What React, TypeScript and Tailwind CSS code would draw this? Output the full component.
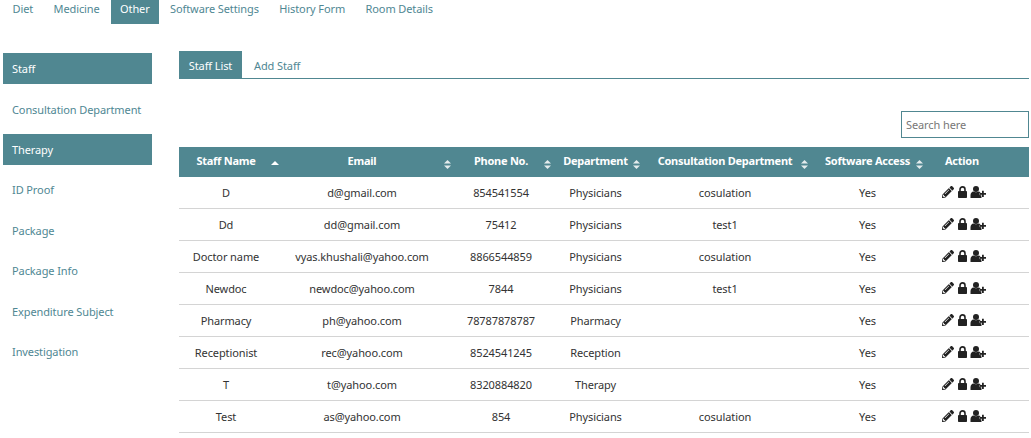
import React from "react";
import { FaPencilAlt } from "react-icons/fa";

const topTabs = ["Diet", "Medicine", "Other", "Software Settings", "History Form", "Room Details"];

const sideItems = [
  { label: "Staff", active: true },
  { label: "Consultation Department", active: false },
  { label: "Therapy", active: true },
  { label: "ID Proof", active: false },
  { label: "Package", active: false },
  { label: "Package Info", active: false },
  { label: "Expenditure Subject", active: false },
  { label: "Investigation", active: false },
];

const columns = [
  { label: "Staff Name", sort: "asc", sortClass: "-right-[6px] top-[14px]" },
  { label: "Email", sort: "both", sortClass: "right-[0px] top-[13px]" },
  { label: "Phone No.", sort: "both", sortClass: "right-[0px] top-[13px]" },
  { label: "Department", sort: "both", sortClass: "right-[0px] top-[13px]" },
  { label: "Consultation Department", sort: "both", sortClass: "right-[2px] top-[13px]" },
  { label: "Software Access", sort: "both", sortClass: "right-[2px] top-[13px]" },
];

const rows = [
  ["D", "d@gmail.com", "854541554", "Physicians", "cosulation"],
  ["Dd", "dd@gmail.com", "75412", "Physicians", "test1"],
  ["Doctor name", "vyas.khushali@yahoo.com", "8866544859", "Physicians", "cosulation"],
  ["Newdoc", "newdoc@yahoo.com", "7844", "Physicians", "test1"],
  ["Pharmacy", "ph@yahoo.com", "78787878787", "Pharmacy", ""],
  ["Receptionist", "rec@yahoo.com", "8524541245", "Reception", ""],
  ["T", "t@yahoo.com", "8320884820", "Therapy", ""],
  ["Test", "as@yahoo.com", "854", "Physicians", "cosulation"],
];

const SortIcon = ({ type }: { type: string }) =>
  type === "asc" ? (
    <svg width="8" height="4" viewBox="0 0 8 4" className="block">
      <path d="M4 0 L8 4 L0 4 Z" fill="#fff" />
    </svg>
  ) : (
    <svg width="7" height="9" viewBox="0 0 7 9" className="block">
      <path d="M3.5 0 L7 3.5 L0 3.5 Z" fill="#e4eced" />
      <path d="M3.5 9 L7 5.5 L0 5.5 Z" fill="#e4eced" />
    </svg>
  );

const LockIcon = () => (
  <svg width="9" height="12" viewBox="0 0 9 12" className="block shrink-0">
    <path d="M2 6V3.4a2.5 2.5 0 0 1 5 0V6" fill="none" stroke="#222" strokeWidth="1.6" />
    <rect x="0" y="5" width="9" height="7" rx="0.8" fill="#222" />
  </svg>
);

const UserPlusIcon = () => (
  <svg width="16" height="12" viewBox="0 0 16 12" className="block shrink-0">
    <circle cx="6" cy="3" r="3" fill="#222" />
    <path d="M0.5 12V9.2C0.5 7.2 1.8 5.8 3.5 5.6C4.8 6.4 7.2 6.4 8.5 5.6C10.2 5.8 11.5 7.2 11.5 9.2V12Z" fill="#222" />
    <path d="M12 4.8h1.8v2.2H16v1.8h-2.2V11H12V8.8H9.8V7H12Z" fill="#222" stroke="#fff" strokeWidth="0.6" paintOrder="stroke" />
  </svg>
);

const App = () => {
  return (
    <div className="w-[1031px] h-[438px] overflow-hidden bg-white font-['Noto_Sans',sans-serif] text-[11px] tracking-[-0.1px] text-[#333]">
      <div className="flex h-6 pl-[3px]">
        {topTabs.map((t) => (
          <div
            key={t}
            className={`h-6 px-[9.5px] leading-[18px] mr-[1.4px] ${
              t === "Other" ? "bg-[#508791] text-white" : "text-[#4f8793]"
            }`}
          >
            {t}
          </div>
        ))}
      </div>

      <div className="flex pt-[27px] pl-[3px]">
        <div className="w-[149px] shrink-0 flex flex-col gap-[9.4px] pt-[2.2px]">
          {sideItems.map((s) => (
            <div
              key={s.label}
              className={`h-[31px] leading-[31px] pl-[9px] whitespace-nowrap ${
                s.active ? "bg-[#508791] text-white" : "text-[#4f8793]"
              }`}
            >
              {s.label}
            </div>
          ))}
        </div>

        <div className="w-[850px] ml-[27px]">
          <div className="flex h-7 border-b border-[#508791]">
            <div className="w-[63px] h-[27px] leading-[29px] text-center bg-[#508791] text-white">Staff List</div>
            <div className="pl-3 leading-[29px] text-[#4f8793]">Add Staff</div>
          </div>

          <div className="flex justify-end pt-8 pb-[9px]">
            <input
              placeholder="Search here"
              className="w-[128px] h-[27px] px-1 border border-[#508791] outline-none text-[11px] placeholder:text-[#777]"
            />
          </div>

          <table className="w-[850px] table-fixed border-separate border-spacing-0">
            <colgroup>
              <col className="w-[94px]" />
              <col className="w-[178px]" />
              <col className="w-[100px]" />
              <col className="w-[89px]" />
              <col className="w-[170px]" />
              <col className="w-[115px]" />
              <col className="w-[104px]" />
            </colgroup>
            <thead>
              <tr className="h-[30px] bg-[#508791] text-white">
                {columns.map((c) => (
                  <th key={c.label} className="relative p-0 pb-[2px] font-bold tracking-[-0.25px] text-center whitespace-nowrap">
                    {c.label}
                    <span className={`absolute ${c.sortClass}`}>
                      <SortIcon type={c.sort} />
                    </span>
                  </th>
                ))}
                <th className="p-0 pl-5 pb-[2px] font-bold tracking-[-0.25px] text-left">Action</th>
              </tr>
            </thead>
            <tbody>
              {rows.map((r) => (
                <tr key={r[0]} className="h-8">
                  {r.map((cell, i) => (
                    <td key={i} className="p-0 pt-[2px] text-center whitespace-nowrap border-b border-[#d4d4d4]">
                      {cell}
                    </td>
                  ))}
                  <td className="p-0 pt-[2px] text-center border-b border-[#d4d4d4]">Yes</td>
                  <td className="p-0 pl-[17px] border-b border-[#d4d4d4]">
                    <div className="flex items-center gap-[3.5px] -translate-y-px">
                      <FaPencilAlt size={12} className="text-[#222] shrink-0" />
                      <LockIcon />
                      <UserPlusIcon />
                    </div>
                  </td>
                </tr>
              ))}
            </tbody>
          </table>
        </div>
      </div>
    </div>
  );
};

export default App;
